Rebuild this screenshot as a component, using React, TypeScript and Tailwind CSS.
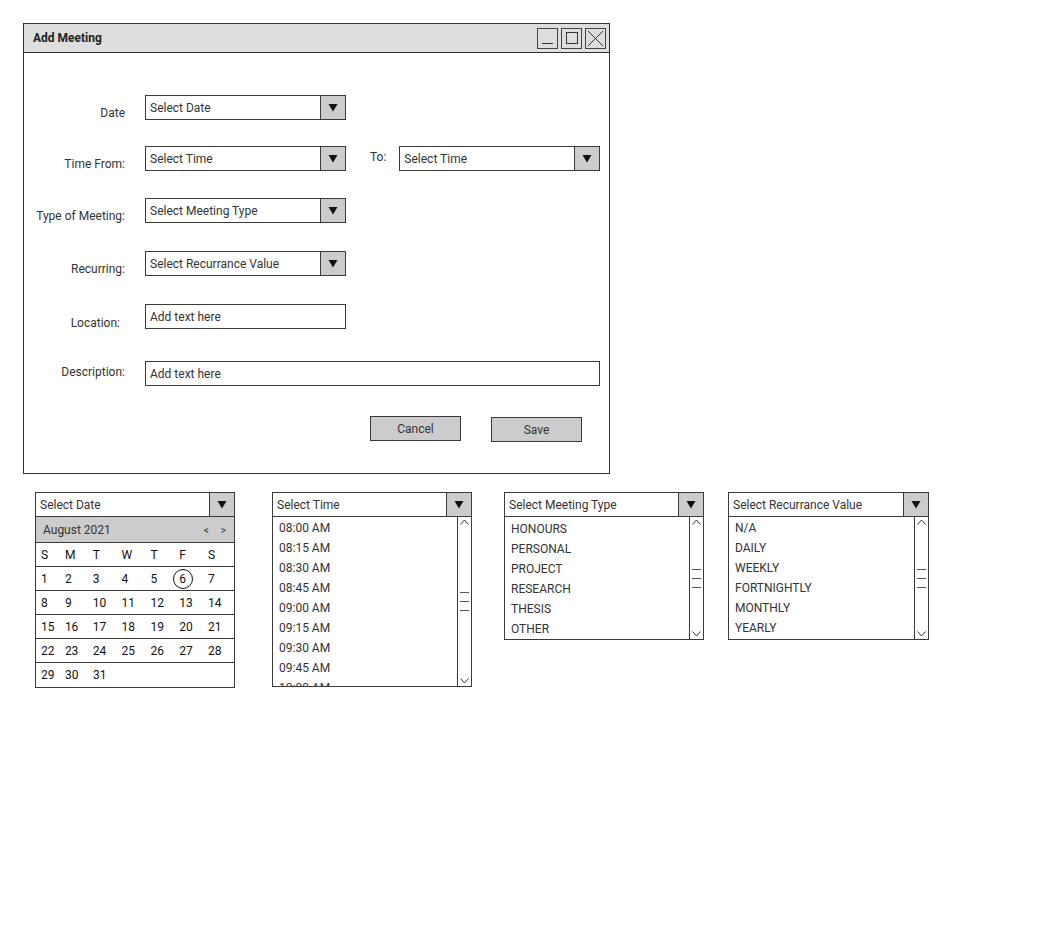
import React from "react";

const Tri = () => (
  <svg width="10" height="9" viewBox="0 0 10 9">
    <polygon points="0.5,1 9.5,1 5,8.5" fill="#111" />
  </svg>
);

function Select({ text, w, className = "" }: { text: string; w: string; className?: string }) {
  return (
    <div className={`flex h-[25px] border border-[#3a3a3a] bg-white ${w} ${className}`}>
      <div className="flex flex-1 items-center pl-[4px] text-[12px] text-[#333]">{text}</div>
      <div className="flex w-[25px] items-center justify-center border-l border-[#3a3a3a] bg-[#cccccc]">
        <Tri />
      </div>
    </div>
  );
}

function Input({ text, w }: { text: string; w: string }) {
  return (
    <div className={`flex h-[25px] items-center border border-[#3a3a3a] bg-white pl-[4px] text-[12px] text-[#333] ${w}`}>
      {text}
    </div>
  );
}

function Label({ text, pt = "pt-[10px]", pr = "pr-0" }: { text: string; pt?: string; pr?: string }) {
  return (
    <div className={`h-[25px] w-[101px] shrink-0 text-right text-[12px] leading-[16px] text-[#333] ${pt} ${pr}`}>{text}</div>
  );
}

function Scrollbar() {
  return (
    <div className="flex w-[14px] flex-col items-center justify-between border-l border-[#3a3a3a] py-[2px]">
      <svg width="9" height="6" viewBox="0 0 9 6">
        <polyline points="0.5,5.5 4.5,1 8.5,5.5" fill="none" stroke="#333" strokeWidth="1" />
      </svg>
      <div className="flex flex-col items-center gap-[8px]">
        <div className="h-[1px] w-[9px] bg-[#555]" />
        <div className="h-[1px] w-[9px] bg-[#555]" />
        <div className="h-[1px] w-[9px] bg-[#555]" />
      </div>
      <svg width="9" height="6" viewBox="0 0 9 6">
        <polyline points="0.5,0.5 4.5,5 8.5,0.5" fill="none" stroke="#333" strokeWidth="1" />
      </svg>
    </div>
  );
}

function ListWidget({
  header,
  items,
  w,
  h,
  pt,
}: {
  header: string;
  items: string[];
  w: string;
  h: string;
  pt: string;
}) {
  return (
    <div className={`flex flex-col ${w}`}>
      <Select text={header} w="w-full" />
      <div className={`flex border-x border-b border-[#3a3a3a] bg-white ${h}`}>
        <div className={`flex-1 overflow-hidden pl-[6px] ${pt}`}>
          {items.map((it) => (
            <div key={it} className="h-[20px] text-[12px] leading-[20px] text-[#333]">
              {it}
            </div>
          ))}
        </div>
        <Scrollbar />
      </div>
    </div>
  );
}

const colW = ["w-[24px]", "w-[28px]", "w-[29px]", "w-[29px]", "w-[29px]", "w-[29px]", "w-[26px]"];

function CalRow({ cells, last = false }: { cells: (string | number)[]; last?: boolean }) {
  return (
    <div className={`flex items-center border-t border-[#3a3a3a] pl-[5px] text-[12px] text-[#111] ${last ? "h-[25px]" : "h-[24px]"}`}>
      {cells.map((c, i) => (
        <div key={i} className={`${colW[i]} relative`}>
          {c === 6 ? (
            <span className="relative inline-block">
              <span className="absolute left-1/2 top-1/2 h-[20px] w-[20px] -translate-x-1/2 -translate-y-1/2 rounded-full border border-[#111]" />
              {c}
            </span>
          ) : (
            c
          )}
        </div>
      ))}
    </div>
  );
}

function Calendar() {
  const rows = [
    [1, 2, 3, 4, 5, 6, 7],
    [8, 9, 10, 11, 12, 13, 14],
    [15, 16, 17, 18, 19, 20, 21],
    [22, 23, 24, 25, 26, 27, 28],
    [29, 30, 31],
  ];
  return (
    <div className="flex w-[200px] flex-col">
      <Select text="Select Date" w="w-full" />
      <div className="border-x border-b border-[#3a3a3a] bg-white">
        <div className="flex h-[25px] items-center justify-between bg-[#cccccc] pl-[7px] pr-[8px] pt-[1px] text-[12px] text-[#333]">
          <span>August 2021</span>
          <span className="flex gap-[12px] text-[10px]">
            <span>&lt;</span>
            <span>&gt;</span>
          </span>
        </div>
        <CalRow cells={["S", "M", "T", "W", "T", "F", "S"]} />
        {rows.map((r, i) => (
          <CalRow key={i} cells={r} last={i === rows.length - 1} />
        ))}
      </div>
    </div>
  );
}

export default function App() {
  return (
    <div
      className="h-[950px] w-[1050px] bg-white pl-[23px] pt-[23px]"
      style={{ fontFamily: "Roboto, 'Liberation Sans', sans-serif" }}
    >
      {/* Window */}
      <div className="flex h-[451px] w-[587px] flex-col border border-[#333] bg-white">
        <div className="flex h-[29px] items-center justify-between border-b border-[#333] bg-[#dedede] pl-[9px] pr-[3px]">
          <span className="text-[12px] font-bold text-[#222]">Add Meeting</span>
          <div className="flex gap-[3px]">
            <div className="flex h-[21px] w-[21px] items-end justify-center border border-[#444] pb-[4px]">
              <div className="h-[1px] w-[11px] bg-[#333]" />
            </div>
            <div className="flex h-[21px] w-[21px] items-center justify-center border border-[#444]">
              <div className="h-[12px] w-[12px] border border-[#333]" />
            </div>
            <div className="flex h-[21px] w-[21px] items-center justify-center border border-[#444]">
              <svg width="17" height="17" viewBox="0 0 17 17">
                <line x1="1" y1="1" x2="16" y2="16" stroke="#333" strokeWidth="1" />
                <line x1="16" y1="1" x2="1" y2="16" stroke="#333" strokeWidth="1" />
              </svg>
            </div>
          </div>
        </div>

        <div className="flex flex-col pt-[42px]">
          <div className="flex items-start gap-[20px]">
            <Label text="Date" />
            <Select text="Select Date" w="w-[201px]" />
          </div>
          <div className="mt-[26px] flex items-start gap-[20px]">
            <Label text="Time From:" />
            <Select text="Select Time" w="w-[201px]" />
            <div className="ml-[4px] pt-[3px] text-[12px] leading-[16px] text-[#333]">To:</div>
            <Select text="Select Time" w="w-[201px]" className="-ml-[7px]" />
          </div>
          <div className="mt-[27px] flex items-start gap-[20px]">
            <Label text="Type of Meeting:" />
            <Select text="Select Meeting Type" w="w-[201px]" />
          </div>
          <div className="mt-[28px] flex items-start gap-[20px]">
            <Label text="Recurring:" />
            <Select text="Select Recurrance Value" w="w-[201px]" />
          </div>
          <div className="mt-[28px] flex items-start gap-[20px]">
            <Label text="Location:" pt="pt-[11px]" pr="pr-[5px]" />
            <Input text="Add text here" w="w-[201px]" />
          </div>
          <div className="mt-[32px] flex items-start gap-[20px]">
            <Label text="Description:" pt="pt-[3px]" />
            <Input text="Add text here" w="w-[455px]" />
          </div>
          <div className="mt-[30px] flex items-start pl-[346px]">
            <div className="flex h-[25px] w-[91px] items-center justify-center border border-[#3a3a3a] bg-[#cccccc] text-[12px] text-[#333]">
              Cancel
            </div>
            <div className="ml-[30px] mt-[1px] flex h-[25px] w-[91px] items-center justify-center border border-[#3a3a3a] bg-[#cccccc] text-[12px] text-[#333]">
              Save
            </div>
          </div>
        </div>
      </div>

      {/* Widgets */}
      <div className="mt-[18px] flex items-start pl-[12px]">
        <Calendar />
        <div className="ml-[37px]">
          <ListWidget
            header="Select Time"
            items={["08:00 AM", "08:15 AM", "08:30 AM", "08:45 AM", "09:00 AM", "09:15 AM", "09:30 AM", "09:45 AM", "10:00 AM"]}
            w="w-[200px]"
            h="h-[170px]"
            pt="pt-[1px]"
          />
        </div>
        <div className="ml-[32px]">
          <ListWidget
            header="Select Meeting Type"
            items={["HONOURS", "PERSONAL", "PROJECT", "RESEARCH", "THESIS", "OTHER"]}
            w="w-[200px]"
            h="h-[123px]"
            pt="pt-[2px]"
          />
        </div>
        <div className="ml-[24px]">
          <ListWidget
            header="Select Recurrance Value"
            items={["N/A", "DAILY", "WEEKLY", "FORTNIGHTLY", "MONTHLY", "YEARLY"]}
            w="w-[201px]"
            h="h-[123px]"
            pt="pt-[1px]"
          />
        </div>
      </div>
    </div>
  );
}
